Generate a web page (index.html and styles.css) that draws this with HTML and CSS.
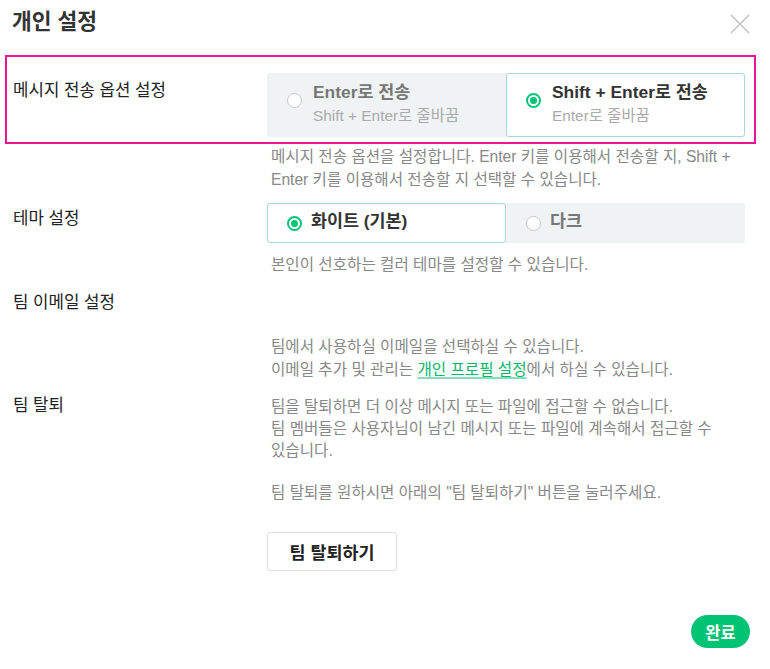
FILE: index.html
```html
<!DOCTYPE html>
<html lang="ko">
<head>
<meta charset="utf-8">
<title>개인 설정</title>
<link rel="stylesheet" href="styles.css">
</head>
<body>
<div class="modal">
  <header class="modal-header">
    <h1 class="modal-title">개인 설정</h1>
    <button class="close-btn" aria-label="닫기">
      <svg width="20" height="20" viewBox="0 0 20 20"><path d="M1 1 L19 19 M19 1 L1 19" stroke="#bdbdbd" stroke-width="1.4" fill="none"/></svg>
    </button>
  </header>

  <section class="setting highlight">
    <div class="setting-label">메시지 전송 옵션 설정</div>
    <div class="segment tall">
      <div class="option">
        <span class="radio"></span>
        <div class="option-text">
          <div class="option-title">Enter로 전송</div>
          <div class="option-sub">Shift + Enter로 줄바꿈</div>
        </div>
      </div>
      <div class="option selected">
        <span class="radio on"></span>
        <div class="option-text">
          <div class="option-title">Shift + Enter로 전송</div>
          <div class="option-sub">Enter로 줄바꿈</div>
        </div>
      </div>
    </div>
  </section>
  <div class="setting desc-row">
    <div></div>
    <p class="desc">메시지 전송 옵션을 설정합니다. Enter 키를 이용해서 전송할 지, Shift + Enter 키를 이용해서 전송할 지 선택할 수 있습니다.</p>
  </div>

  <section class="setting theme">
    <div class="setting-label">테마 설정</div>
    <div class="segment short">
      <div class="option selected">
        <span class="radio on"></span>
        <div class="option-title">화이트 (기본)</div>
      </div>
      <div class="option">
        <span class="radio"></span>
        <div class="option-title">다크</div>
      </div>
    </div>
  </section>
  <div class="setting desc-row">
    <div></div>
    <p class="desc theme-desc">본인이 선호하는 컬러 테마를 설정할 수 있습니다.</p>
  </div>

  <section class="setting email">
    <div class="setting-label">팀 이메일 설정</div>
    <div></div>
  </section>
  <div class="setting desc-row">
    <div></div>
    <p class="desc email-desc">팀에서 사용하실 이메일을 선택하실 수 있습니다.<br>이메일 추가 및 관리는 <a class="link" href="#">개인 프로필 설정</a>에서 하실 수 있습니다.</p>
  </div>

  <section class="setting leave">
    <div class="setting-label">팀 탈퇴</div>
    <div class="leave-body">
      <p class="desc leave-desc">팀을 탈퇴하면 더 이상 메시지 또는 파일에 접근할 수 없습니다.<br>팀 멤버들은 사용자님이 남긴 메시지 또는 파일에 계속해서 접근할 수 있습니다.</p>
      <p class="desc leave-desc">팀 탈퇴를 원하시면 아래의 "팀 탈퇴하기" 버튼을 눌러주세요.</p>
      <button class="leave-btn">팀 탈퇴하기</button>
    </div>
  </section>

  <footer class="modal-footer">
    <button class="done-btn">완료</button>
  </footer>
</div>
</body>
</html>
```
FILE: styles.css
```css
* { box-sizing: border-box; }
html, body { margin: 0; padding: 0; background: #fff; }
body {
  font-family: "Liberation Sans", "Noto Sans CJK KR", sans-serif;
  font-size: 15.6px;
  color: #333;
  width: 770px;
  height: 669px;
  overflow: hidden;
}
.modal { position: relative; width: 770px; height: 669px; }
.modal-header {
  height: 55px;
  display: flex;
  justify-content: space-between;
  align-items: flex-start;
  padding: 9px 20px 0 12px;
}
.modal-title {
  margin: 0;
  font-size: 21.5px;
  font-weight: bold;
  line-height: 26px;
  color: #333;
}
.close-btn {
  border: 0;
  background: none;
  padding: 0;
  margin-top: 5px;
  width: 20px;
  height: 20px;
  cursor: pointer;
}
.close-btn svg { display: block; }

.setting {
  display: grid;
  grid-template-columns: 254px 1fr;
  margin: 0 14px 0 5px;
  padding: 0 9px 0 6px;
  border: 2px solid transparent;
}
.setting.highlight {
  border-color: #ee1491;
  padding-top: 16px;
  padding-bottom: 5px;
}
.setting-label {
  font-size: 16.8px;
  line-height: 20px;
  color: #222;
  padding-top: 8px;
}
.segment {
  display: grid;
  grid-template-columns: 1fr 1fr;
  background: #f0f3f4;
  border-radius: 3px;
}
.segment.tall { height: 64px; }
.segment.short { height: 40px; }
.option {
  display: flex;
  align-items: center;
  padding-left: 19px;
  border: 1px solid transparent;
  border-radius: 3px;
}
.option.selected {
  background: #fff;
  border-color: #a9d9d0;
}
.segment.tall .option { align-items: flex-start; padding-top: 7px; }
.segment.tall .option .radio { margin-top: 12px; }
.radio {
  width: 15px;
  height: 15px;
  border-radius: 50%;
  border: 1px solid #c8c8c8;
  background: #fff;
  flex: none;
  margin-right: 11px;
  position: relative;
}
.radio.on { border: 2px solid #00c473; }
.radio.on::after {
  content: "";
  position: absolute;
  left: 2px; top: 2px;
  width: 7px; height: 7px;
  border-radius: 50%;
  background: #00c473;
}
.option-title {
  font-size: 17.4px;
  font-weight: bold;
  line-height: 23px;
  color: #777;
}
.option.selected .option-title { color: #333; }
.option-sub {
  font-size: 15.4px;
  line-height: 23px;
  color: #aaa;
}
.segment.short .option { padding-left: 19px; }
.segment.short .option .radio { margin-right: 9px; }
.segment.short .option-title { margin-top: -3px; }

.desc-row { border-width: 0 2px; }
.desc {
  margin: 0;
  padding-left: 4px;
  font-size: 15.6px;
  line-height: 23px;
  color: #888;
  word-break: keep-all;
}
.desc-row .desc { padding-top: 1px; padding-bottom: 10px; }
.desc-row .theme-desc { padding-top: 8px; padding-bottom: 15px; }
.desc-row .email-desc { padding-top: 20px; padding-bottom: 18px; }
.theme .setting-label { padding-top: 6px; }
.email .setting-label { padding-top: 0; }
.link {
  color: #00b86c;
  text-decoration: underline;
  text-decoration-color: #86dfb8;
  text-decoration-thickness: 2px;
  text-underline-offset: 2px;
}
.leave .setting-label { padding-top: 0; margin-top: -5px; }
.leave-body { display: flex; flex-direction: column; align-items: flex-start; }
.leave-desc { line-height: 22px; margin-top: -5px; }
.leave-desc + .leave-desc { margin-top: 20px; }
.leave-btn {
  margin-top: 28px;
  width: 130px;
  height: 39px;
  background: #fff;
  border: 1px solid #dedede;
  border-radius: 3px;
  font-family: inherit;
  font-size: 17.4px;
  font-weight: bold;
  color: #222;
  cursor: pointer;
}
.modal-footer {
  display: flex;
  justify-content: flex-end;
  padding: 42px 20px 0 0;
}
.done-btn {
  width: 59px;
  height: 33px;
  border: 0;
  border-radius: 17px;
  background: #00c473;
  color: #fff;
  font-family: inherit;
  font-size: 16.5px;
  font-weight: bold;
  cursor: pointer;
}
```
